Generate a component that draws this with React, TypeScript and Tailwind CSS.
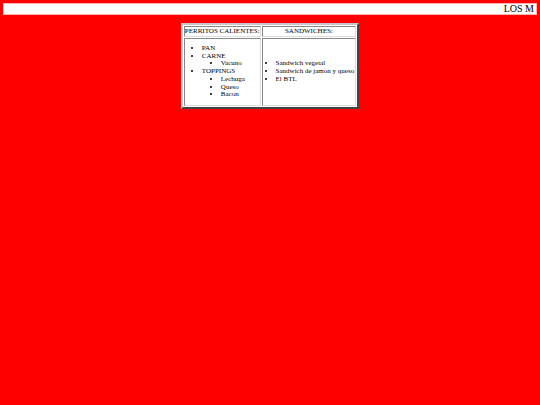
export default function App() {
  return (
    <div className="min-h-[405px] w-full bg-[#ff0000] pt-[3px] font-['Liberation_Serif',serif] text-black">
      {/* marquee */}
      <div className="mx-[3px] flex h-[12px] items-center justify-end overflow-hidden border border-[#ffb3b3] bg-white pr-[2px] text-[10px] leading-none">
        <span className="whitespace-nowrap">LOS M</span>
      </div>

      <div className="mt-[8px] flex justify-center">
        <table className="border-separate border-spacing-[1px] border-2 border-t-[#c8c8c8] border-l-[#c8c8c8] border-r-[#444] border-b-[#444] bg-white text-[7px] leading-[7.7px] whitespace-nowrap">
          <thead>
            <tr>
              <th className="border border-t-[#888] border-l-[#888] border-r-[#ddd] border-b-[#ddd] px-0 py-[1px] font-normal leading-[7px]">
                PERRITOS CALIENTES:
              </th>
              <th className="border border-t-[#888] border-l-[#888] border-r-[#ddd] border-b-[#ddd] px-0 py-[1px] font-normal leading-[7px]">
                SANDWICHES:
              </th>
            </tr>
          </thead>
          <tbody>
            <tr>
              <td className="border border-t-[#888] border-l-[#888] border-r-[#ddd] border-b-[#ddd] p-0 align-middle">
                <ul className="my-[6px] list-disc pl-[17px]">
                  <li>PAN</li>
                  <li>
                    CARNE
                    <ul className="list-disc pl-[19px]">
                      <li>Vacuno</li>
                    </ul>
                  </li>
                  <li>
                    TOPPINGS
                    <ul className="list-disc pl-[19px]">
                      <li>Lechuga</li>
                      <li>Queso</li>
                      <li>Bacon</li>
                    </ul>
                  </li>
                </ul>
              </td>
              <td className="border border-t-[#888] border-l-[#888] border-r-[#ddd] border-b-[#ddd] p-0 align-middle">
                <ul className="list-disc pl-[13px] pr-[1px]">
                  <li>Sandwich vegetal</li>
                  <li>Sandwich de jamon y queso</li>
                  <li>El BTL</li>
                </ul>
              </td>
            </tr>
          </tbody>
        </table>
      </div>
    </div>
  );
}
